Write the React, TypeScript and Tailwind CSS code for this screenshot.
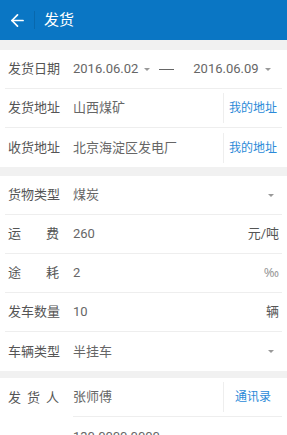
import { ArrowLeft } from 'lucide-react';

const font = "font-['Roboto','Noto_Sans_CJK_SC',sans-serif]";

function Caret() {
  return <span className="block h-0 w-0 border-x-[3px] border-t-[3px] border-x-transparent border-t-[#999]" />;
}

function Row({ label, children, last, right }: { label: React.ReactNode; children?: React.ReactNode; last?: boolean; right?: React.ReactNode }) {
  return (
    <div className={`mx-[5px] flex h-[39px] items-center ${last ? '' : 'border-b border-[#eeeeee]'}`}>
      <div className="w-[68px] pl-[3px] text-[13px] text-[#555]">{label}</div>
      <div className="flex-1 text-[13px] text-[#666]">{children}</div>
      {right}
    </div>
  );
}

function Spread({ chars }: { chars: string[] }) {
  return (
    <div className="flex w-[51px] justify-between">
      {chars.map((c, i) => (
        <span key={i}>{c}</span>
      ))}
    </div>
  );
}

function LinkRight({ text }: { text: string }) {
  return (
    <div className="flex h-[30px] w-[59px] items-center justify-center border-l border-[#eeeeee] text-[12px] text-[#2b8ad8]">{text}</div>
  );
}

export default function App() {
  return (
    <div className={`min-h-screen bg-[#f1f1f1] ${font}`}>
      {/* Header */}
      <div className="flex h-[40px] items-center bg-[#0a76c4] text-white">
        <div className="flex w-[34px] justify-center">
          <ArrowLeft className="h-[19px] w-[19px]" strokeWidth={2.2} />
        </div>
        <div className="h-[18px] w-px bg-[#0868ad]" />
        <div className="pl-[9px] text-[15px]">发货</div>
      </div>

      <div className="mt-[10px] bg-white">
        <Row label="发货日期">
          <div className="flex items-center">
            <span>2016.06.02</span>
            <span className="ml-[6px]"><Caret /></span>
            <span className="ml-[9px] mr-[19px] inline-block h-px w-[15px] bg-[#666]" />
            <span>2016.06.09</span>
            <span className="ml-[6px]"><Caret /></span>
          </div>
        </Row>
        <Row label="发货地址" right={<LinkRight text="我的地址" />}>
          山西煤矿
        </Row>
        <Row label="收货地址" last right={<LinkRight text="我的地址" />}>
          北京海淀区发电厂
        </Row>
      </div>

      <div className="mt-[9px] bg-white">
        <Row label="货物类型" right={<div className="pr-[8px]"><Caret /></div>}>
          煤炭
        </Row>
        <Row label={<Spread chars={['运', '费']} />} right={<span className="pr-[3px] text-[13px] text-[#555]">元/吨</span>}>
          260
        </Row>
        <Row label={<Spread chars={['途', '耗']} />} right={<span className="pr-[3px] font-['Noto_Sans',sans-serif] text-[13px] text-[#999]">‰</span>}>
          2
        </Row>
        <Row label="发车数量" right={<span className="pr-[3px] text-[13px] text-[#555]">辆</span>}>
          10
        </Row>
        <Row label="车辆类型" last right={<div className="pr-[8px]"><Caret /></div>}>
          半挂车
        </Row>
      </div>

      <div className="mt-[7px] bg-white">
        <div className="mx-[5px] flex h-[39px] items-center">
          <div className="w-[68px] pl-[3px] text-[13px] text-[#555]">
            <Spread chars={['发', '货', '人']} />
          </div>
          <div className="flex h-full flex-1 items-center border-b border-[#eeeeee] text-[13px] text-[#666]">
            <span className="flex-1">张师傅</span>
            <LinkRight text="通讯录" />
          </div>
        </div>
        <div className="mx-[5px] flex h-[39px] items-center">
          <div className="w-[68px]" />
          <div className="text-[13px] text-[#666]">130 0000 0000</div>
        </div>
      </div>
    </div>
  );
}
